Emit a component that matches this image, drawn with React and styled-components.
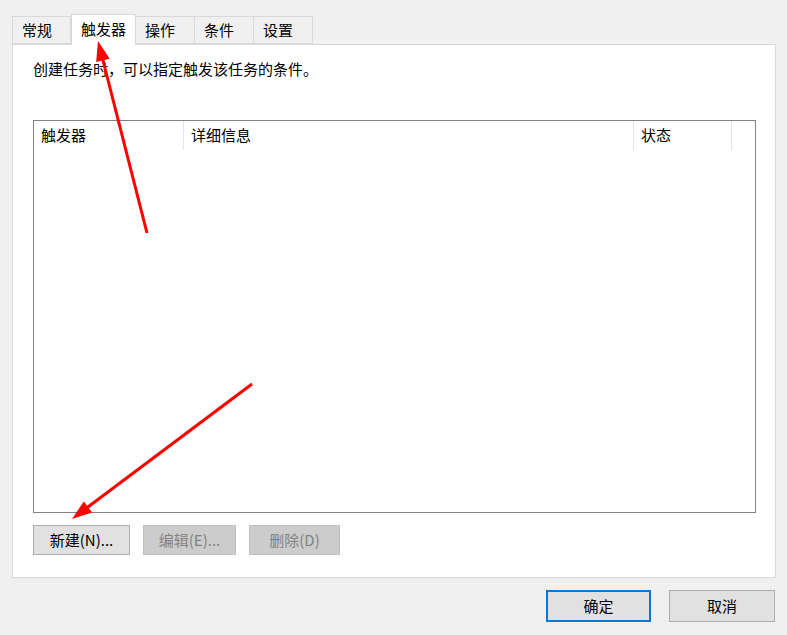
import React from 'react'
import styled, { createGlobalStyle } from 'styled-components'

const GlobalStyle = createGlobalStyle`
  html, body {
    margin: 0;
    padding: 0;
    background: #f0f0f0;
  }
  body {
    font-family: "Noto Sans CJK SC", "Noto Sans", "Liberation Sans", sans-serif;
    font-size: 15px;
    color: #000;
  }
`

const Dialog = styled.div`
  position: relative;
  width: 787px;
  height: 635px;
  box-sizing: border-box;
  padding: 16px 11px 0 12px;
  background: #f0f0f0;
  overflow: hidden;
`

const TabStrip = styled.div`
  display: flex;
  height: 28px;
  align-items: flex-end;
  position: relative;
  z-index: 1;
`

const Tab = styled.div`
  box-sizing: border-box;
  width: ${p => p.$w}px;
  height: ${p => (p.$active ? 31 : 28)}px;
  margin-bottom: ${p => (p.$active ? -1 : 0)}px;
  padding-left: 9px;
  padding-bottom: ${p => (p.$active ? 3 : 2)}px;
  display: flex;
  align-items: center;
  background: ${p => (p.$active ? '#fff' : '#f0f0f0')};
  border: 1px solid #d9d9d9;
  border-bottom: ${p => (p.$active ? 'none' : '1px solid #d9d9d9')};
  border-left: ${p => (p.$first || p.$active ? '1px solid #d9d9d9' : 'none')};
  line-height: 1;
`

const Panel = styled.div`
  box-sizing: border-box;
  height: 534px;
  background: #fff;
  border: 1px solid #d9d9d9;
  padding: 14px 20px 0 20px;
  display: flex;
  flex-direction: column;
`

const Desc = styled.div`
  height: 20px;
  line-height: 20px;
  margin-bottom: 41px;
`

const ListView = styled.div`
  box-sizing: border-box;
  width: 723px;
  height: 393px;
  border: 1px solid #828282;
  background: #fff;
`

const HeaderRow = styled.div`
  display: flex;
  height: 30px;
`

const HeaderCell = styled.div`
  box-sizing: border-box;
  width: ${p => p.$w}px;
  height: 29px;
  padding-left: 7px;
  padding-bottom: 3px;
  display: flex;
  align-items: center;
  border-right: ${p => (p.$last ? 'none' : '1px solid #e5e5e5')};
`

const ButtonRow = styled.div`
  display: flex;
  gap: 13px;
  margin-top: 12px;
`

const Button = styled.button`
  box-sizing: border-box;
  width: ${p => p.$w}px;
  height: ${p => (p.$h ? p.$h : 30)}px;
  font-family: inherit;
  font-size: 15px;
  padding: 0 0 1px 0;
  background: ${p => (p.$disabled ? '#cccccc' : '#e1e1e1')};
  color: ${p => (p.$disabled ? '#838383' : '#000')};
  border: ${p => (p.$primary ? '2px solid #0078d7' : p.$disabled ? '1px solid #bfbfbf' : '1px solid #adadad')};
  cursor: default;
`

const Footer = styled.div`
  display: flex;
  justify-content: flex-end;
  gap: 18px;
  margin-top: 12px;
  padding-right: 1px;
`

const Overlay = styled.svg`
  position: absolute;
  left: 0;
  top: 0;
  width: 787px;
  height: 635px;
  pointer-events: none;
  z-index: 5;
`

function Arrow({ x1, y1, x2, y2 }) {
  const dx = x2 - x1
  const dy = y2 - y1
  const len = Math.hypot(dx, dy)
  const ux = dx / len
  const uy = dy / len
  const headLen = 20
  const headW = 7
  const bx = x2 - ux * headLen
  const by = y2 - uy * headLen
  const px = -uy
  const py = ux
  const pts = `${x2},${y2} ${bx + px * headW},${by + py * headW} ${bx - px * headW},${by - py * headW}`
  return (
    <g>
      <line x1={x1} y1={y1} x2={bx + ux * 3} y2={by + uy * 3} stroke="#ff0000" strokeWidth="3" />
      <polygon points={pts} fill="#ff0000" />
    </g>
  )
}

export default function App() {
  const tabs = [
    { label: '常规', w: 59 },
    { label: '触发器', w: 65, active: true },
    { label: '操作', w: 59 },
    { label: '条件', w: 59 },
    { label: '设置', w: 59 },
  ]
  const cols = [
    { label: '触发器', w: 150 },
    { label: '详细信息', w: 450 },
    { label: '状态', w: 98 },
    { label: '', w: 23, last: true },
  ]
  return (
    <Dialog>
      <GlobalStyle />
      <TabStrip>
        {tabs.map((t, i) => (
          <Tab key={t.label} $w={t.w} $active={t.active} $first={i === 0}>
            {t.label}
          </Tab>
        ))}
      </TabStrip>
      <Panel>
        <Desc>创建任务时，可以指定触发该任务的条件。</Desc>
        <ListView>
          <HeaderRow>
            {cols.map((c, i) => (
              <HeaderCell key={i} $w={c.w} $last={c.last}>{c.label}</HeaderCell>
            ))}
          </HeaderRow>
        </ListView>
        <ButtonRow>
          <Button $w={97}>新建(N)...</Button>
          <Button $w={93} $disabled>编辑(E)...</Button>
          <Button $w={91} $disabled>删除(D)</Button>
        </ButtonRow>
      </Panel>
      <Footer>
        <Button $w={105} $h={32} $primary>确定</Button>
        <Button $w={106} $h={32}>取消</Button>
      </Footer>
      <Overlay viewBox="0 0 787 635">
        <Arrow x1={147} y1={233} x2={98} y2={41} />
        <Arrow x1={252} y1={384} x2={72} y2={519} />
      </Overlay>
    </Dialog>
  )
}
